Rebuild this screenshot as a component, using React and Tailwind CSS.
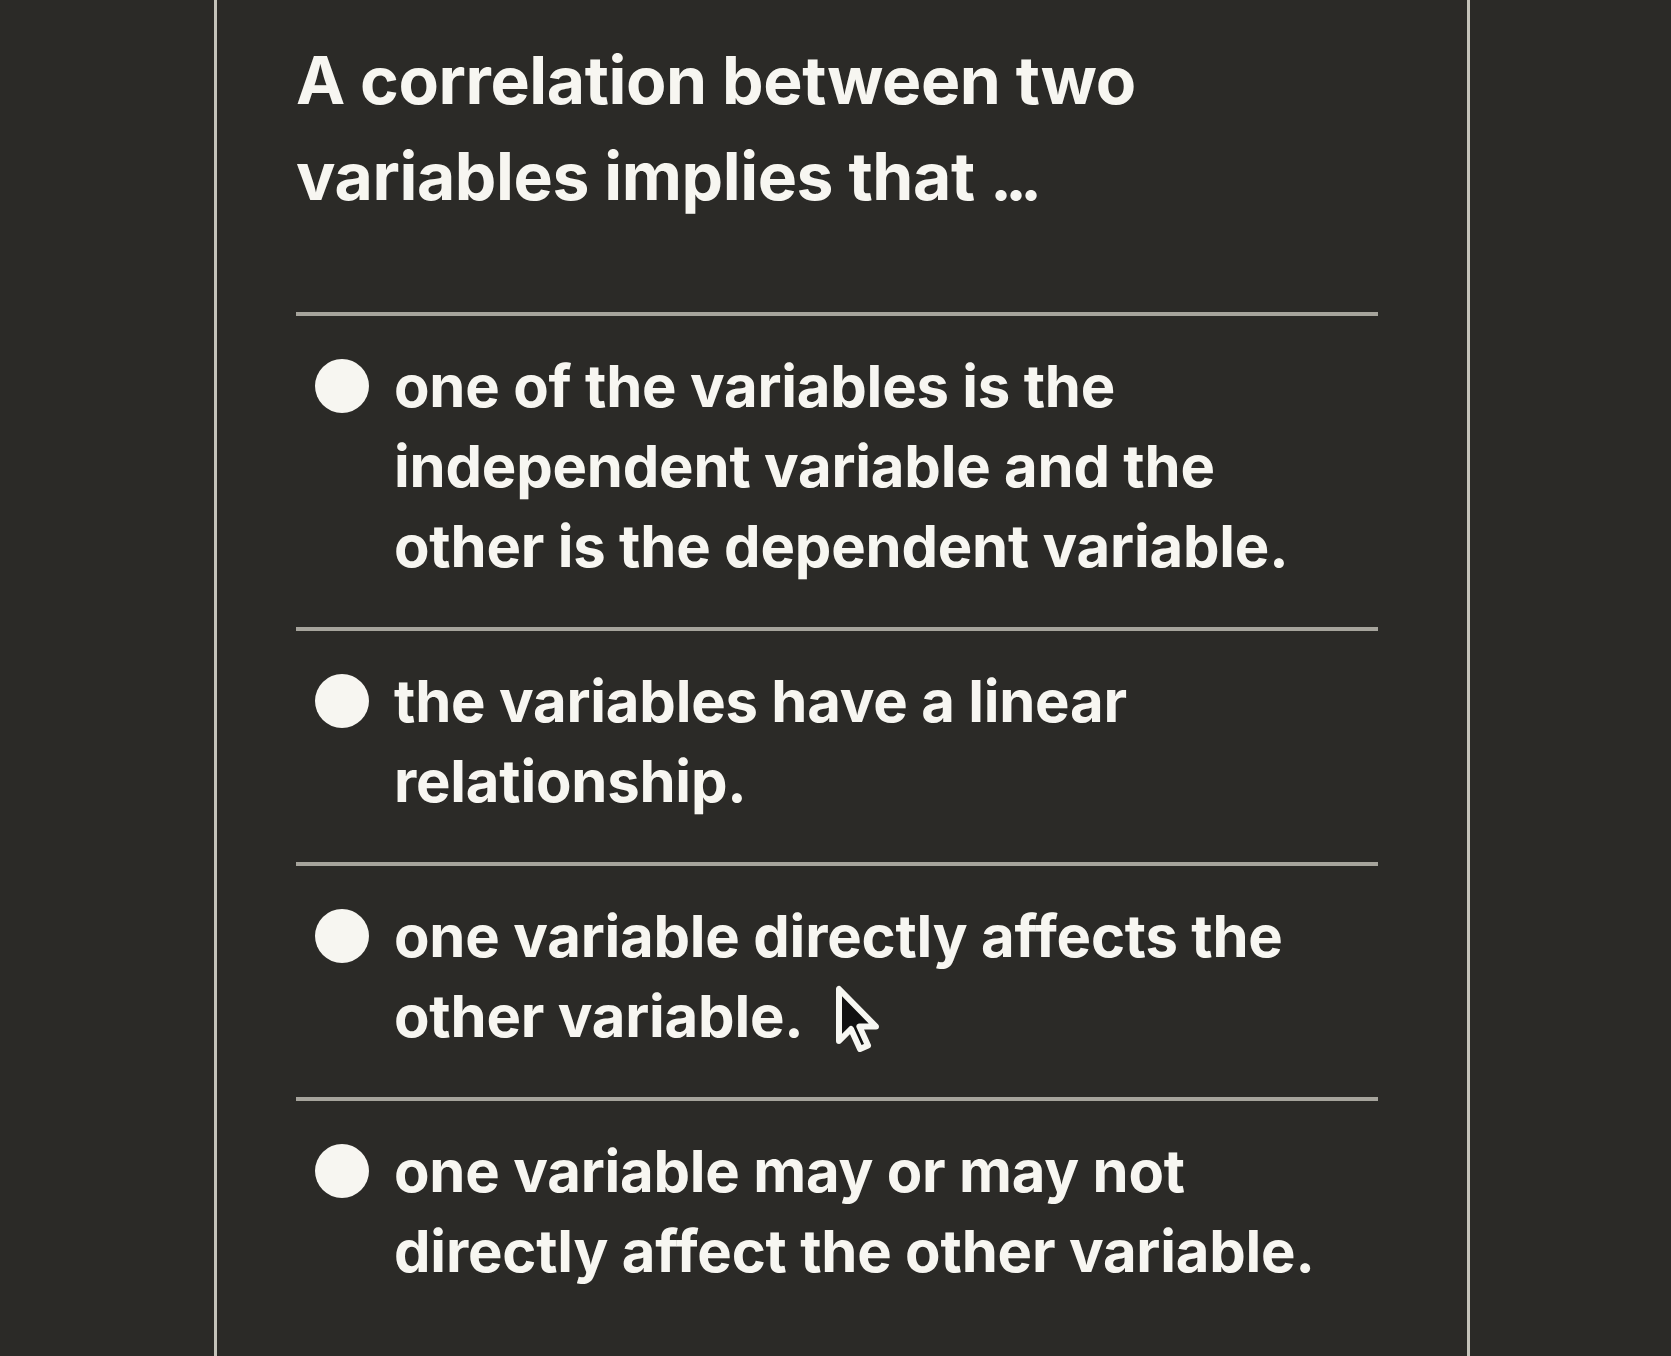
const options = [
  ['one of the variables is the', 'independent variable and the', 'other is the dependent variable.'],
  ['the variables have a linear', 'relationship.'],
  ['one variable directly affects the', 'other variable.'],
  ['one variable may or may not', 'directly affect the other variable.'],
];

const Cursor = () => (
  <svg width="52" height="78" viewBox="0 0 26 39" className="absolute left-[441px] top-[89px]">
    <path
      d="M2 2 L2 28 L8 22 L12.5 32 L16.5 30.2 L12.2 20.8 L20.5 20.8 Z"
      fill="#111"
      stroke="#f7f7f2"
      strokeWidth="3"
      strokeLinejoin="round"
    />
  </svg>
);

const Divider = () => <div className="h-[4px] w-full bg-[#a6a49c]" />;

export default function App() {
  return (
    <div className="h-[1356px] overflow-hidden bg-[#2b2a27] font-['Inter',sans-serif] text-[#f7f6f1]">
      <div className="ml-[214px] h-full w-[1256px] border-x-[3px] border-[#c4c2b9] pl-[79px] pr-[89px]">
        <h1 className="pt-[32px] pb-[88px] text-[66px] font-bold leading-[96px] tracking-[-0.4px]">
          A correlation between two
          <br />
          variables implies that <span className="tracking-[-7px]">...</span>
        </h1>
        <Divider />
        {options.map((lines, i) => (
          <div key={i}>
            <div className="flex gap-[25px] pl-[19px] pt-[30px] pb-[41px]">
              <span className="mt-[13px] h-[54px] w-[54px] shrink-0 rounded-full bg-[#f7f6f1]" />
              <p className="relative text-[58px] font-bold leading-[80px] tracking-[-0.2px]">
                {lines.map((line, j) => (
                  <span key={j} className="block whitespace-nowrap">
                    {line}
                  </span>
                ))}
                {i === 2 && <Cursor />}
              </p>
            </div>
            {i < options.length - 1 && <Divider />}
          </div>
        ))}
      </div>
    </div>
  );
}
